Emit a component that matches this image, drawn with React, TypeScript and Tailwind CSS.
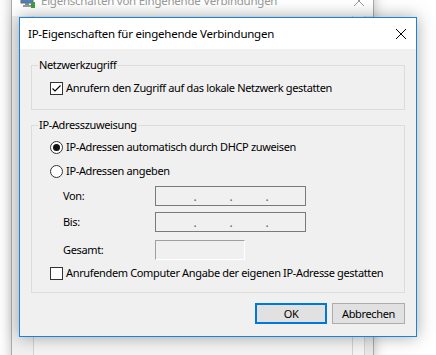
import React from "react";

/* ── Small Win10 controls ───────────────────────────────────────── */
function CheckBox({ checked }: { checked?: boolean }) {
  return (
    <span className="w-[13px] h-[13px] shrink-0 border border-[#333333] bg-white flex items-center justify-center">
      {checked && (
        <svg width="11" height="11" viewBox="0 0 11 11">
          <polyline points="1.5,5.5 4,8 9.5,2.5" fill="none" stroke="#000" strokeWidth="1.1" />
        </svg>
      )}
    </span>
  );
}

function Radio({ checked }: { checked?: boolean }) {
  return (
    <span className="w-[13px] h-[13px] shrink-0 rounded-full border border-[#333333] bg-white flex items-center justify-center">
      {checked && <span className="w-[7px] h-[7px] rounded-full bg-[#111111]" />}
    </span>
  );
}

function IpField() {
  return (
    <div className="w-[151px] h-[20px] border border-[#7a7a7a] bg-[#f0f0f0] flex items-end pl-[21px] text-[12px] leading-[16px] text-[#5d5d80]">
      {[0, 1, 2].map((i) => (
        <span key={i} className="w-[36px] text-center">
          .
        </span>
      ))}
    </div>
  );
}

/* ── Main ───────────────────────────────────────────────────────── */
export default function App() {
  return (
    <div className="relative w-[436px] h-[355px] overflow-hidden bg-white font-['Noto_Sans','Segoe_UI',sans-serif] text-[11px] tracking-[-0.35px] text-black">
      {/* Parent window behind the dialog */}
      <div className="absolute left-[11px] top-[-15px] w-[363px] h-[380px] border-x border-[#aaaaaa] bg-[#f0f0f0] shadow-[0_0_12px_rgba(0,0,0,0.25)] flex flex-col">
        <div className="h-[31px] bg-white flex items-center pl-[8px] pr-[9px]">
          <svg width="16" height="16" viewBox="0 0 16 16" className="shrink-0">
            <rect x="1" y="1" width="12" height="9" fill="#4a7fc1" stroke="#6b6b6b" />
            <rect x="5" y="10" width="4" height="2" fill="#8a8a8a" />
            <rect x="3" y="12" width="11" height="2" fill="#9a9a9a" />
            <rect x="11" y="9" width="4" height="6" fill="#3fa046" />
          </svg>
          <span className="ml-[5px] text-[11.5px] tracking-[-0.25px] text-[#9a9a9a] whitespace-nowrap">
            Eigenschaften von Eingehende Verbindungen
          </span>
          <svg width="10" height="10" viewBox="0 0 10 10" className="ml-auto">
            <path d="M0 0L10 10M10 0L0 10" stroke="#999" strokeWidth="1" />
          </svg>
        </div>
        <div className="flex-1 flex pl-[21px]">
          <div className="w-[332px] border-x border-[#d2d2d2] bg-[#f4f4f4] flex justify-end">
            <div className="w-[12px] border-l border-[#d2d2d2]" />
          </div>
          <div className="flex-1 bg-[#e8e8e8]" />
        </div>
      </div>

      {/* IP properties dialog */}
      <div className="absolute left-[19px] top-[17px] w-[398px] h-[320px] border border-[#1883d7] bg-[#f0f0f0] shadow-[0_0_16px_rgba(0,0,0,0.35)] flex flex-col">
        <div className="h-[31px] bg-white flex items-center justify-between pl-[8px] pr-[10px]">
          <span className="text-[11.5px] tracking-[-0.25px]">IP-Eigenschaften für eingehende Verbindungen</span>
          <svg width="10" height="10" viewBox="0 0 10 10">
            <path d="M0 0L10 10M10 0L0 10" stroke="#000" strokeWidth="1" />
          </svg>
        </div>

        <div className="flex-1 flex flex-col px-[11px] pt-[8px]">
          <fieldset className="border border-[#dcdcdc] p-0">
            <legend className="ml-[6px] px-[1px] leading-[16px]">Netzwerkzugriff</legend>
            <div className="pl-[18px] pt-[7px] pb-[13px]">
              <label className="h-[16px] flex items-center gap-[3px]">
                <CheckBox checked />
                <span>Anrufern den Zugriff auf das lokale Netzwerk gestatten</span>
              </label>
            </div>
          </fieldset>

          <fieldset className="mt-[7px] border border-[#dcdcdc] p-0">
            <legend className="ml-[6px] px-[1px] leading-[16px]">IP-Adresszuweisung</legend>
            <div className="pl-[18px] pt-[6px] pb-[11px] flex flex-col">
              <label className="h-[16px] flex items-center gap-[3px]">
                <Radio checked />
                <span>IP-Adressen automatisch durch DHCP zuweisen</span>
              </label>
              <label className="mt-[8px] h-[16px] flex items-center gap-[3px]">
                <Radio />
                <span>IP-Adressen angeben</span>
              </label>

              <div className="mt-[7px] pl-[13px] flex items-center">
                <span className="w-[92px]">Von:</span>
                <IpField />
              </div>
              <div className="mt-[6px] pl-[13px] flex items-center">
                <span className="w-[92px]">Bis:</span>
                <IpField />
              </div>
              <div className="mt-[8px] pl-[13px] flex items-center">
                <span className="w-[92px]">Gesamt:</span>
                <div className="w-[90px] h-[20px] border-t border-l border-[#a0a0a0] border-r border-b border-r-white border-b-white bg-[#f0f0f0]" />
              </div>

              <label className="mt-[5px] h-[16px] flex items-center gap-[3px]">
                <CheckBox />
                <span className="whitespace-nowrap">Anrufendem Computer Angabe der eigenen IP-Adresse gestatten</span>
              </label>
            </div>
          </fieldset>

          <div className="mt-[10px] flex justify-end gap-[5px]">
            <button className="w-[72px] h-[21px] border-2 border-[#0078d7] bg-[#e1e1e1] leading-none">OK</button>
            <button className="w-[73px] h-[21px] border border-[#adadad] bg-[#e1e1e1] leading-none">Abbrechen</button>
          </div>
        </div>
      </div>
    </div>
  );
}
